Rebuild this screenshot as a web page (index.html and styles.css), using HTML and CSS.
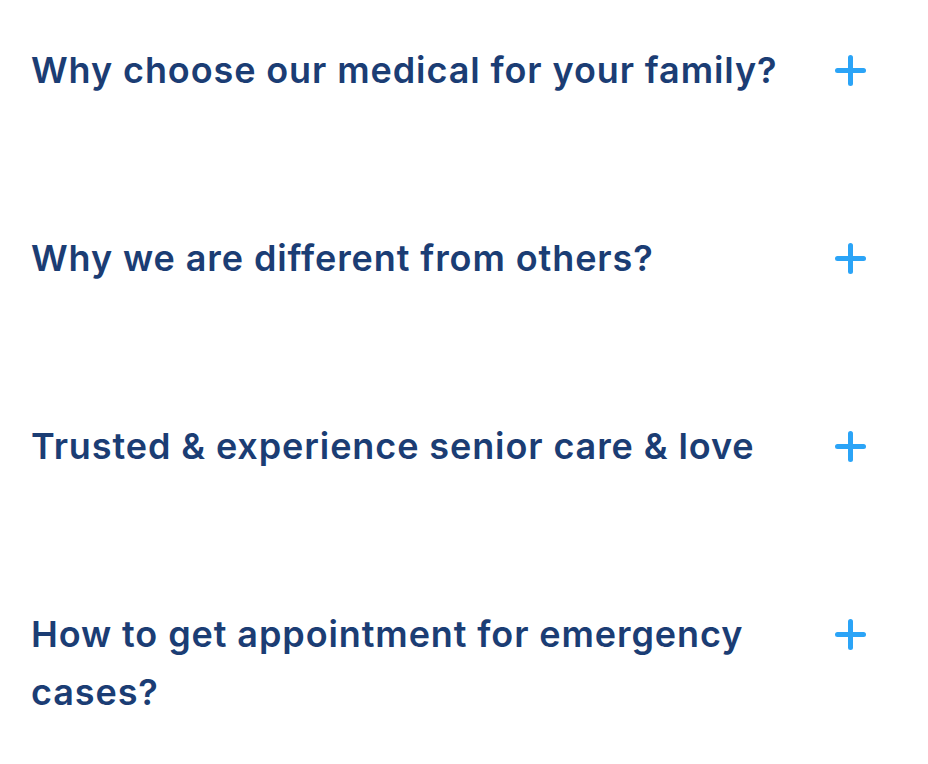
FILE: index.html
```html
<!DOCTYPE html>
<html lang="en">
  <head>
    <meta charset="UTF-8" />
    <meta name="viewport" content="width=device-width, initial-scale=1.0" />
    <title>FAQ</title>
    <link rel="stylesheet" href="styles.css">
  </head>
  <body>
    <div class="faq">
      <div class="faq-item">
        <h3 class="faq-question">Why choose our medical for your family?</h3>
        <span class="faq-toggle"></span>
      </div>
      <div class="faq-item">
        <h3 class="faq-question">Why we are different from others?</h3>
        <span class="faq-toggle"></span>
      </div>
      <div class="faq-item">
        <h3 class="faq-question">Trusted &amp; experience senior care &amp; love</h3>
        <span class="faq-toggle"></span>
      </div>
      <div class="faq-item">
        <h3 class="faq-question">How to get appointment for emergency cases?</h3>
        <span class="faq-toggle"></span>
      </div>
    </div>
  </body>
</html>
```

FILE: styles.css
```css
body {
  font-family: Inter, "Open Sans", sans-serif;
  background-color: #fff;
  margin: 0;
  padding: 0;
}
.faq {
  padding: 41px 0 0 31px;
  width: 835px;
}
.faq-item {
  display: flex;
  align-items: flex-start;
  justify-content: space-between;
  margin-bottom: 130px;
}
.faq-item:last-child {
  margin-bottom: 0;
}
.faq-question {
  margin: 0;
  width: 775px;
  font-size: 36px;
  font-weight: 600;
  letter-spacing: 0.9px;
  line-height: 58px;
  color: #1b3d74;
}
.faq-toggle {
  position: relative;
  width: 31px;
  height: 31px;
  margin-top: 14px;
}
.faq-toggle::before,
.faq-toggle::after {
  content: "";
  position: absolute;
  background-color: #2ba4f7;
  border-radius: 3px;
}
.faq-toggle::before {
  left: 0;
  top: 13px;
  width: 31px;
  height: 5px;
}
.faq-toggle::after {
  left: 13px;
  top: 0;
  width: 5px;
  height: 31px;
}
```
